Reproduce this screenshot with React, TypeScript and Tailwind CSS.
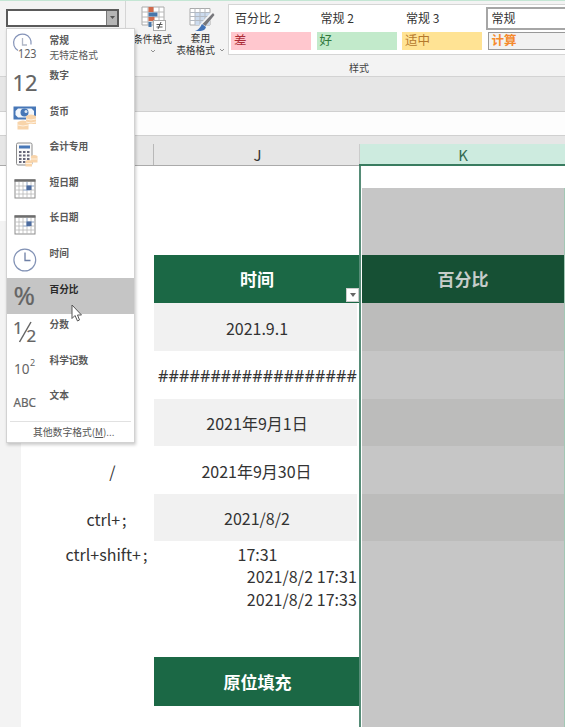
import React from "react";

function ClockIcon({ general = false }: { general?: boolean }) {
  return (
    <svg width="32" height="32" viewBox="0 0 32 32" fill="none">
      {general ? (
        <>
          <path d="M7 21.5A8.8 8.8 0 1 1 20 15.500" stroke="#8493b8" strokeWidth="1.2" />
          <path d="M11.500 9V16H16" stroke="#b0b6c5" strokeWidth="1.3" />
          <text x="7" y="28.500" fontSize="12" textLength="18.500" lengthAdjust="spacingAndGlyphs" fill="#5f5f5f" fontFamily="Noto Sans">123</text>
        </>
      ) : (
        <>
          <circle cx="13.800" cy="17" r="10.900" stroke="#8292b5" strokeWidth="1.2" />
          <path d="M14 9.500V17.500H19.500" stroke="#6e7fa5" strokeWidth="1.3" />
        </>
      )}
    </svg>
  );
}

function MoneyIcon() {
  return (
    <svg width="28" height="30" viewBox="0 0 28 30">
      <rect x="2.500" y="6.500" width="22.500" height="13" fill="#4777b7" />
      <path d="M7 8.500H20.500L23 11V15L20.500 17.500H7L4.500 15V11Z" fill="#f3f7fc" />
      <circle cx="13.500" cy="12.500" r="4" fill="#4777b7" />
      <circle cx="15" cy="11.500" r="1.500" fill="#dce8f5" />
      <path d="M15 16q5-3 10 0v8h-10Z" fill="#f8d4aa" />
      <path d="M6.500 22q5.500-3 11 0v7.500h-11Z" fill="#f8d4aa" />
      <path d="M15 19q5 2 10 0M15 22q5 2 10 0M6.500 25q5.500 2 11 0" stroke="#fff1df" fill="none" />
    </svg>
  );
}

function CalculatorIcon() {
  return (
    <svg width="28" height="32" viewBox="0 0 28 32">
      <rect x="5.500" y="7" width="15.500" height="22" rx="1.500" fill="#fafafa" stroke="#8c8c8c" />
      <rect x="8" y="9.500" width="11" height="3" fill="#4777b7" />
      {[15, 18.5, 22, 25].map((y) => [8, 12, 16].map((x) => <rect key={`${x}-${y}`} x={x} y={y} width="2.500" height="2" fill="#666678" />))}
      <path d="M20 20q3-2 6.500 0v6.500H20ZM14.500 25q3-2 6.500 0v5.500h-6.500Z" fill="#f8d4aa" />
      <path d="M20 23h6M15 27.500h6" stroke="#fff0dc" />
    </svg>
  );
}

function CalendarIcon() {
  return (
    <svg width="28" height="30" viewBox="0 0 28 30" fill="none">
      <rect x="4" y="9" width="20" height="18" fill="#fff" stroke="#8d8d8d" />
      <path d="M3.500 9.500H24.500" stroke="#6e6e6e" strokeWidth="2.500" />
      <path d="M8 11V27M12 11V27M16 11V27M20 11V27M4.500 15H23.500M4.500 19H23.500M4.500 23H23.500" stroke="#b8b8b8" strokeWidth=".8" />
      <path d="M16 11v9M16 15h7M12 19h7" stroke="#9ab5dc" strokeWidth=".8" />
      <rect x="15.500" y="14.500" width="5" height="4.500" fill="#4d6c9f" />
    </svg>
  );
}

function TextIcon({ children, size, y, width, x = 2.5 }: { children: React.ReactNode; size: number; y: number; width: number; x?: number }) {
  return (
    <svg width="30" height="35" viewBox="0 0 30 35">
      <text x={x} y={y} fontSize={size} textLength={width} lengthAdjust="spacingAndGlyphs" fill="#646464" stroke="#646464" strokeWidth=".2" fontFamily="Noto Sans">{children}</text>
    </svg>
  );
}

const menuItems = [
  { label: "常规", detail: "无特定格式", icon: <ClockIcon general /> },
  { label: "数字", icon: <TextIcon size={22.5} y={25.5} width={25} x={1.5}>12</TextIcon> },
  { label: "货币", icon: <MoneyIcon /> },
  { label: "会计专用", icon: <CalculatorIcon /> },
  { label: "短日期", icon: <CalendarIcon /> },
  { label: "长日期", icon: <CalendarIcon /> },
  { label: "时间", icon: <ClockIcon /> },
  { label: "百分比", icon: <TextIcon size={25} y={27} width={21.5}>%</TextIcon> },
  {
    label: "分数",
    icon: (
      <svg width="30" height="35" viewBox="0 0 30 35" fill="#646464" stroke="#646464" strokeWidth=".2" fontFamily="Noto Sans">
        <text x="2" y="20" fontSize="17">1</text>
        <path d="M20 8L8.500 28" strokeWidth="1.5" />
        <text x="15.500" y="28" fontSize="17">2</text>
      </svg>
    ),
  },
  {
    label: "科学记数",
    icon: (
      <svg width="30" height="30" fill="#646464" fontFamily="Noto Sans">
        <text x="3" y="25" fontSize="14.500" textLength="15.500" lengthAdjust="spacingAndGlyphs">10</text>
        <text x="19" y="16.500" fontSize="9">2</text>
      </svg>
    ),
  },
  { label: "文本", icon: <TextIcon size={12.5} y={22} width={22.5}>ABC</TextIcon> },
];

function FormatMenu() {
  return (
    <div className="absolute left-[6px] top-[28px] flex h-[415px] w-[129px] flex-col border border-[#d2d2d2] bg-white shadow-[1px_2px_3px_#0003]">
      {menuItems.map((item) => (
        <div key={item.label} className={`flex h-[35.6px] shrink-0 ${item.label === "百分比" ? "bg-[#c5c5c5]" : ""}`}>
          <div className="w-[42.5px] shrink-0 pl-[4px]">{item.icon}</div>
          <div className="pt-[3.5px] text-[9.7px] leading-[15px] whitespace-nowrap text-[#5a5a5a]">
            <div className={`font-bold ${item.label === "百分比" ? "text-[#292929]" : ""}`}>{item.label}</div>
            {item.detail && <div>{item.detail}</div>}
          </div>
        </div>
      ))}
      <div className="mx-[3px] flex h-[21px] items-center border-t border-[#e1e1e1] pt-[2px] pl-[23px] text-[9.8px] whitespace-nowrap text-[#555]">
        其他数字格式(<u>M</u>)...
      </div>
    </div>
  );
}

function Chevron() {
  return <svg width="6" height="4" viewBox="0 0 6 4" fill="none"><path d="M1 1L3 3L5 1" stroke="#777" strokeWidth=".8" /></svg>;
}

function Ribbon() {
  return (
    <div className="flex h-[77px] shrink-0 border-t border-b border-t-[#c4e6d4] border-b-[#d3d3d3] bg-[#f3f3f3]">
      <div className="w-[126px] shrink-0 border-r border-[#d5d5d5] pt-[8px] pl-[6px]">
        <div className="flex h-[18px] w-[113px] border-2 border-[#5a5a5a] bg-white">
          <div className="ml-auto flex w-[11px] items-center justify-center border-l border-[#777] bg-[#b5b5b5]">
            <svg width="5" height="4"><path d="M0 0H5L2.500 3Z" fill="#555" /></svg>
          </div>
        </div>
      </div>
      <div className="flex w-[49px] shrink-0 flex-col items-center pl-[4px] pt-[4px] text-[9.7px] leading-[12px] whitespace-nowrap text-[#333]">
        <svg width="26" height="26" viewBox="0 0 26 26">
          <path d="M2 2H24V20H2Z" fill="#fff" stroke="#aaa" />
          <path d="M2 7H24M2 12H24M2 17H24M8 2V20M13 2V20M19 2V20" stroke="#b8b8b8" />
          <path d="M8.500 2h5v5h-5ZM8.500 12h6v4h-6Z" fill="#d1694a" />
          <path d="M8.500 7.500h9v4h-9ZM8.500 17h3v5h-3Z" fill="#4777ab" />
          <rect x="13.500" y="15.500" width="12" height="10" fill="#fff" stroke="#aaa" />
          <path d="M16.500 19.500h6M16.500 22h6M21 17l-3 7" stroke="#444" strokeWidth=".9" />
        </svg>
        <div className="mt-[2px]">条件格式</div>
        <div className="mt-[2px] flex h-[8px] items-center"><Chevron /></div>
      </div>
      <div className="flex w-[53px] shrink-0 flex-col items-center pt-[4px] pr-[2px] text-[9.7px] leading-[12px] whitespace-nowrap text-[#333]">
        <svg width="28" height="26" viewBox="0 0 28 26">
          <path d="M3 3.500H23V20H3Z" fill="#fff" stroke="#aaa" />
          <path d="M8 7.500H23V20H8Z" fill="#ccdbee" />
          <path d="M3 7.500H23M3 11.500H23M3 15.500H23M8 3.500V20M13 3.500V20M18 3.500V20" stroke="#b3b9c1" />
          <path d="M26 9L14 22" stroke="#f6f6f6" strokeWidth="5" />
          <path d="M26 8L27.500 10L18.500 21L15.500 19Z" fill="#77777b" />
          <path d="M15 19l4 3q-1 5-11 4q4-1 7-7Z" fill="#4273b7" />
        </svg>
        <div className="mt-px">套用</div>
        <div className="flex items-center gap-[4px]">表格格式 <Chevron /></div>
      </div>
      <div className="flex min-w-0 flex-1 flex-col">
        <div className="mt-[3px] h-[51px] w-[338px] shrink-0 border border-[#d5d5d5] bg-white pt-[2px] pl-[2px]">
          <div className="grid grid-cols-[80px_80px_80px_85px] gap-x-[5.5px] text-[12px] leading-[21px] whitespace-nowrap text-[#333]">
            <div className="pl-[4px]">百分比 2</div>
            <div className="pl-[4px]">常规 2</div>
            <div className="pl-[4px]">常规 3</div>
            <div className="-ml-[2px] h-[23px] border-2 border-[#a6a6a6] pl-[4px] leading-[17px]">常规</div>
          </div>
          <div className="mt-[2px] grid grid-cols-[80px_80px_80px_85px] gap-x-[5.5px] text-[12.5px] leading-[15px]">
            <div className="h-[18px] bg-[#ffc7ce] pl-[3px] text-[#ac2c37]">差</div>
            <div className="h-[18px] bg-[#c2eacb] pl-[3px] text-[#31793d]">好</div>
            <div className="h-[18px] bg-[#ffe394] pl-[3px] text-[#b5792d]">适中</div>
            <div className="h-[18px] border border-[#999] bg-[#f2f2f2] pl-[3px] leading-[13px] font-bold text-[#f58a2d]">计算</div>
          </div>
        </div>
        <div className="mt-[6px] pl-[121px] text-[10px] leading-[14px] text-[#444]">样式</div>
      </div>
    </div>
  );
}

const bodyText = "flex shrink-0 items-center justify-center text-[16px] text-[#333] whitespace-pre";

function Sheet() {
  return (
    <div className="flex min-h-0 flex-1">
      <div className="flex w-[154px] shrink-0">
        <div className="w-[21px] shrink-0 pt-[55px]"><div className="h-full bg-[#f3f3f3]" /></div>
        <div className="flex w-[133px] shrink-0 flex-col pt-[281px]">
          <div className={`${bodyText} h-[48px] pl-[50px]`}>/</div>
          <div className={`${bodyText} h-[48px] pl-[38px]`}>ctrl+<span className="pl-[2px]">;</span></div>
          <div className={`${bodyText} h-[22px] pl-[38px]`}>ctrl+shift+<span className="pl-[2px]">;</span></div>
        </div>
      </div>
      <div className="flex w-[205px] shrink-0 flex-col pt-[89px]">
        <div className="flex h-[48px] shrink-0 bg-[#1b6845] text-[17px] font-bold text-white">
          <div className="flex flex-1 items-center justify-center pl-[14px]">时间</div>
          <div className="mt-[33px] flex h-[14px] w-[13px] items-center justify-center border border-[#ccc] bg-white">
            <svg width="6" height="4"><path d="M0 0H6L3 4Z" fill="#666" /></svg>
          </div>
        </div>
        <div className={`${bodyText} mr-[2px] h-[48px] bg-[#f1f1f1] pt-[2px] pl-[3px]`}>2021.9.1</div>
        <div className={`${bodyText} h-[48px] pt-[2px] pl-[2px] font-['Noto_Sans'] tracking-[0.13px]`}>###################</div>
        <div className={`${bodyText} mr-[2px] h-[47px] bg-[#f1f1f1] pl-[3px] text-[16.8px]`}>2021年9月1日</div>
        <div className={`${bodyText} h-[48px] pt-px text-[16.7px]`}>2021年9月30日</div>
        <div className={`${bodyText} mr-[2px] h-[47px] bg-[#f1f1f1] pt-px pl-[3px]`}>2021/8/2</div>
        <div className={`${bodyText} mt-[2px] h-[22px] pl-[2px]`}>17:31</div>
        <div className={`${bodyText} h-[22px] justify-end pr-[2px] tracking-[0.06px]`}>2021/8/2 17:31</div>
        <div className={`${bodyText} h-[23px] justify-end pr-[2px] tracking-[0.06px]`}>2021/8/2 17:33</div>
        <div className="mt-[47px] flex h-[49px] shrink-0 items-center justify-center bg-[#1b6845] pl-[2px] text-[17px] font-bold text-white">原位填充</div>
      </div>
      <div className="flex flex-1 flex-col border-l-2 border-[#568c77] pt-[22px]">
        <div className="ml-px flex flex-1 flex-col border-r border-[#a3c8b5] bg-[#c6c6c6] pt-[67px]">
          <div className="flex h-[48px] shrink-0 items-center justify-center bg-[#165034] text-[17px] font-bold text-[#c6cdc9]">百分比</div>
          <div className="h-[48px] shrink-0 bg-[#bcbcbb]" />
          <div className="mt-[48px] h-[47px] shrink-0 bg-[#bcbcbb]" />
          <div className="mt-[48px] h-[47px] shrink-0 bg-[#bcbcbb]" />
        </div>
      </div>
    </div>
  );
}

export default function App() {
  return (
    <div className="relative flex h-[727px] w-[565px] flex-col overflow-hidden bg-white font-['Noto_Sans_CJK_SC',sans-serif]">
      <Ribbon />
      <div className="h-[35px] shrink-0 border-b border-[#d0d0d0] bg-[#e6e6e6]" />
      <div className="h-[24px] shrink-0 border-b border-[#d0d0d0] bg-[#fdfdfd]" />
      <div className="flex h-[30px] shrink-0 bg-[#e6e6e6] text-[15px] leading-[22px] text-[#333]">
        <div className="flex w-[154px] items-end justify-end border-b border-[#aaa]"><div className="h-[21px] w-px bg-[#b8b8b8]" /></div>
        <div className="w-[205px] border-b border-[#aaa] pt-[8px] pl-[2px] text-center">J</div>
        <div className="flex-1 border-b-2 border-[#397c60] pt-[8px]"><div className="h-[20px] border-l border-[#ccc] bg-[#cdebdf] pl-[1px] text-center text-[#356a51]">K</div></div>
      </div>
      <Sheet />
      <FormatMenu />
      <svg className="absolute left-[70px] top-[303px]" width="14" height="20" viewBox="0 0 14 20">
        <path d="M2 2V15.500L5 12.500L7.500 18L9.500 17L7.500 12H11.500Z" fill="#fff" stroke="#555" />
      </svg>
    </div>
  );
}
